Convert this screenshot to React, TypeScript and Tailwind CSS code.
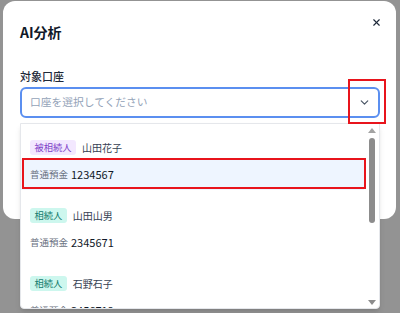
import { ChevronDown, X } from "lucide-react"

interface Account {
  role: "被相続人" | "相続人"
  name: string
  kind: string
  number: string
  selected?: boolean
}

const accounts: Account[] = [
  { role: "被相続人", name: "山田花子", kind: "普通預金", number: "1234567", selected: true },
  { role: "相続人", name: "山田山男", kind: "普通預金", number: "2345671" },
  { role: "相続人", name: "石野石子", kind: "普通預金", number: "3456712" },
]

const font = { fontFamily: '"Noto Sans CJK JP", "Noto Sans", sans-serif' }

const RoleBadge = ({ role }: { role: Account["role"] }) => {
  const cls =
    role === "被相続人"
      ? "bg-[#f3e8ff] text-[#7e3fc8]"
      : "bg-[#cdf7ee] text-[#137a6c]"
  return (
    <span className={`flex h-[15px] items-center rounded-[3px] px-[4.5px] text-[9.25px] leading-none ${cls}`}>
      {role}
    </span>
  )
}

// headless chrome draws no scrollbar, so this one is painted by hand
const FakeScrollbar = () => (
  <div className="flex w-[15px] shrink-0 flex-col items-center pt-[4px]">
    <svg width="8" height="5" viewBox="0 0 8 5" className="text-[#a3a3a3]">
      <path d="M4 0L8 5H0Z" fill="currentColor" />
    </svg>
    <div className="ml-[1px] mt-[5px] h-[85px] w-[6px] rounded-full bg-[#8c8c8c]" />
    <div className="flex-1" />
    <svg width="8" height="5" viewBox="0 0 8 5" className="mb-[3px] text-[#8c8c8c]">
      <path d="M0 0H8L4 5Z" fill="currentColor" />
    </svg>
  </div>
)

export default function App() {
  return (
    <div className="relative h-[313px] w-[400px] overflow-hidden bg-[#939393] px-[3px] pt-px" style={font}>
      <div className="relative h-[218px] w-[393px] rounded-xl bg-white px-[17px] pt-[21px]">
        <button className="absolute right-[14px] top-[16px] text-gray-800">
          <X size={11} strokeWidth={2.5} />
        </button>
        <h2 className="h-5 text-[14px] font-bold leading-5 text-gray-900">AI分析</h2>
        <label className="mt-[26px] block h-4 text-[11px] font-medium leading-4 text-gray-800">
          対象口座
        </label>
        <div className="mt-[3px] flex h-[31px] w-[360px] items-center justify-between rounded-md border-2 border-[#5b8ff0] pl-[8px] pr-[7px]">
          <span className="text-[10.75px] text-[#94a3b8]">口座を選択してください</span>
          <ChevronDown size={13} strokeWidth={2.2} className="text-gray-600" />
        </div>
      </div>

      <div className="absolute left-[20px] top-[123px] flex h-[186px] w-[360px] overflow-hidden rounded-b-[4px] border border-gray-200 bg-white shadow-md">
        <div className="flex-1 overflow-hidden pt-[16px]">
          {accounts.map((a) => (
            <div key={a.number} className="pb-[18px]">
              <div className="flex h-[15px] items-center gap-[6px] px-[9px]">
                <RoleBadge role={a.role} />
                <span className="text-[10px] leading-none text-gray-700">{a.name}</span>
              </div>
              <div
                className={`mt-[4px] flex h-[31px] items-center px-[9px] ${a.selected ? "bg-[#eef5ff]" : ""}`}
              >
                <span className="text-[9.5px] text-gray-500">{a.kind}</span>
                <span className="ml-[3px] text-[11px] text-gray-900">{a.number}</span>
              </div>
            </div>
          ))}
        </div>
        <FakeScrollbar />
      </div>

      <div className="pointer-events-none absolute left-[348px] top-[79px] h-[45px] w-[38px] border-2 border-[#e8141c]" />
      <div className="pointer-events-none absolute left-[22px] top-[158px] h-[31px] w-[344px] border-2 border-[#e8141c]" />
    </div>
  )
}
